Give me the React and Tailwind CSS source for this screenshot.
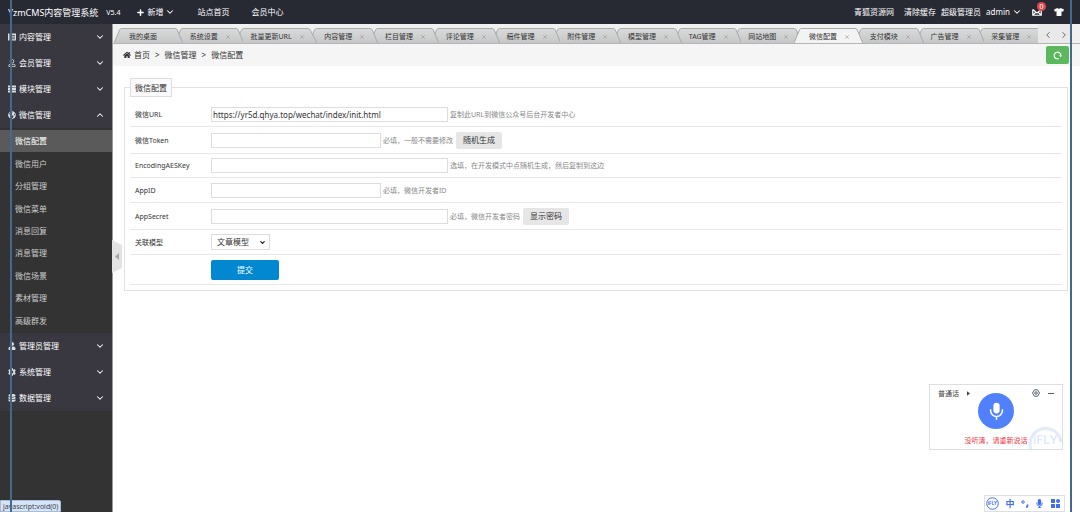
import React from 'react';
import { ChevronDown, ChevronUp, ChevronLeft, ChevronRight, Plus, X } from 'lucide-react';
import {
  FaHome, FaTshirt, FaUser, FaCog, FaDatabase, FaRegUser, FaThList, FaGlobeAmericas, FaMicrophone,
} from 'react-icons/fa';

function BookIcon({ className }) {
  return (
    <svg viewBox="0 0 16 16" className={`h-2 w-2 ${className}`} fill="currentColor">
      <path d="M0 1h3v14H0zM5 1h11v14H5zM7 4v1.500h7V4zM7 7.500V9h7V7.500zM7 11v1.500h7V11z" fillRule="evenodd" />
    </svg>
  );
}

const MENU = [
  { name: '内容管理', icon: BookIcon },
  { name: '会员管理', icon: FaRegUser },
  { name: '模块管理', icon: FaThList },
  {
    name: '微信管理',
    icon: FaGlobeAmericas,
    items: ['微信配置', '微信用户', '分组管理', '微信菜单', '消息回复', '消息管理', '微信场景', '素材管理', '高级群发'],
  },
  { name: '管理员管理', icon: FaUser },
  { name: '系统管理', icon: FaCog },
  { name: '数据管理', icon: FaDatabase },
];

const TABS = [
  '我的桌面', '系统设置', '批量更新URL', '内容管理', '栏目管理', '评论管理', '稿件管理', '附件管理',
  '模型管理', 'TAG管理', '网站地图', '微信配置', '支付模块', '广告管理', '采集管理',
];

function Header() {
  return (
    <header className="flex h-6 items-center bg-[#272a33] pl-2 text-[8px] text-white">
      <a href="#" className="text-[9px]">YzmCMS内容管理系统</a>
      <span className="ml-2 text-[7px]">V5.4</span>
      <nav className="ml-4 flex items-center gap-[22px]">
        <button type="button" className="flex items-center gap-0.5">
          <Plus size={9} strokeWidth={4} />
          新增
          <ChevronDown size={10} strokeWidth={2.5} />
        </button>
        <a href="#">站点首页</a>
        <a href="#">会员中心</a>
      </nav>
      <div className="ml-auto flex items-center pr-4">
        <a href="#">青狐资源网</a>
        <a href="#" className="ml-2.5">清除缓存</a>
        <span className="ml-[5px]">超级管理员</span>
        <button type="button" className="ml-[5px] flex items-center gap-0.5">
          admin
          <ChevronDown size={10} strokeWidth={2.5} />
        </button>
        <a href="#" aria-label="消息" className="relative ml-2.5">
          <svg viewBox="0 0 20 16" className="h-2 w-2.5" fill="none" stroke="currentColor" strokeWidth="2.4">
            <path d="M1.500 3v11.500h17V3M1.500 3l8.500 7 8.500-7M1.500 14.500l6-6M18.500 14.500l-6-6" />
          </svg>
          <span className="absolute -top-1.5 left-[5px] flex h-[9px] w-[9px] items-center justify-center rounded-full bg-[#e4484a] text-[7px] leading-none">0</span>
        </a>
        <button type="button" aria-label="换肤" className="ml-3"><FaTshirt size={10} /></button>
      </div>
    </header>
  );
}

function Sidebar() {
  return (
    <aside className="w-28 shrink-0 bg-[#333333] text-[8px]">
      {MENU.map(({ name, icon: Icon, items }) => (
        <section key={name}>
          <button type="button" className="flex h-[26px] w-full items-center gap-[3px] bg-[#393840] pl-2 pr-[7px] text-white">
            <Icon size={8} className="text-[#dddddd]" />
            {name}
            {items
              ? <ChevronUp size={10} strokeWidth={2.5} className="ml-auto" />
              : <ChevronDown size={10} strokeWidth={2.5} className="ml-auto" />}
          </button>
          {items && (
            <ul className="flex h-[205px] flex-col pb-px pt-0.5">
              {items.map((item, i) => (
                <li key={item} className="flex flex-1">
                  <a
                    href="#"
                    className={i === 0
                      ? 'flex flex-1 items-center bg-[#5a5a5a] pl-[15px] text-white'
                      : 'flex flex-1 items-center pl-[15px] text-[#cccccc]'}
                  >
                    {item}
                  </a>
                </li>
              ))}
            </ul>
          )}
        </section>
      ))}
    </aside>
  );
}

function Tab({ name, active, closable, order }) {
  return (
    <li className="relative flex-auto" style={{ zIndex: order }}>
      <svg
        viewBox="0 0 100 15"
        preserveAspectRatio="none"
        className="absolute inset-y-0 -left-1 h-full w-[calc(100%+8px)]"
      >
        <defs>
          <linearGradient id="tabFill" x1="0" y1="0" x2="0" y2="1">
            <stop offset="0" stopColor="#d9dada" />
            <stop offset="1" stopColor="#c6c7c8" />
          </linearGradient>
        </defs>
        <path
          d="M0 15L8 2Q9 .5 11 .5H89Q91 .5 92 2L100 15"
          fill={active ? '#f3f3f3' : 'url(#tabFill)'}
          stroke="#a9a9a9"
          vectorEffect="non-scaling-stroke"
        />
      </svg>
      <div className="relative flex h-full items-center whitespace-nowrap pl-[11px] pr-2 pt-0.5 text-[7px] text-[#333333]">
        <button type="button">{name}</button>
        {closable
          ? <button type="button" aria-label={`关闭${name}`} className="ml-[7px] text-[#8a8a8a]"><X size={6} /></button>
          : <span className="w-[13px]" />}
      </div>
    </li>
  );
}

function TabBar() {
  return (
    <div className="flex h-5 items-end border-b border-[#b5b5b5] bg-[#f0f0f1]">
      <ul className="isolate -mr-[3px] flex h-[15px] min-w-0 flex-1 overflow-hidden pl-[5px]">
        {TABS.map((name, i) => (
          <Tab
            key={name}
            name={name}
            active={name === '微信配置'}
            closable={i > 0}
            order={name === '微信配置' ? TABS.length + 1 : TABS.length - i}
          />
        ))}
      </ul>
      <div className="relative z-10 mr-2 flex h-full w-[34px] items-center justify-between bg-[#e9e9e9] pl-[5px] pr-[3px] pt-0.5 text-[#555555]">
        <button type="button" aria-label="向左"><ChevronLeft size={10} /></button>
        <button type="button" aria-label="向右"><ChevronRight size={10} /></button>
      </div>
    </div>
  );
}

function Breadcrumb() {
  return (
    <nav className="flex h-[22px] items-center bg-[#f5f5f5] pl-2.5 pr-[11px] text-[8px] text-[#333333]">
      <FaHome size={8} />
      <a href="#" className="ml-[3px]">首页</a>
      <span className="mx-[5px]">&gt;</span>
      <span>微信管理</span>
      <span className="mx-[5px]">&gt;</span>
      <span>微信配置</span>
      <button type="button" aria-label="刷新" className="ml-auto flex h-[18px] w-[23px] items-center justify-center rounded-xs bg-[#5cb85c] text-white">
        <svg viewBox="0 0 16 16" className="h-[9px] w-[9px]" fill="none" stroke="currentColor" strokeWidth="2">
          <path d="M10.500 13.500A6 6 0 1 1 14 8" />
          <path d="M11 7.500h5l-2.500 3.500z" fill="currentColor" stroke="none" />
        </svg>
      </button>
    </nav>
  );
}

const ROW_HEIGHT = {
  slim: 'h-6',
  normal: 'h-[25px]',
  tall: 'h-[27px]',
};

function Row({ label, id, hint, size = 'normal', children, action }) {
  return (
    <div className={`flex items-center border-b border-[#e8e8e8] pl-[5px] ${ROW_HEIGHT[size]}`}>
      <label htmlFor={id} className="w-[76px] shrink-0 text-[7px] text-[#333333]">{label}</label>
      {children}
      {hint && <span className="ml-0.5 text-[7px] text-[#888888]">{hint}</span>}
      {action && (
        <button type="button" className="ml-[3px] flex h-[17px] items-center rounded-xs bg-[#e6e6e6] px-[7px] text-[8px] text-[#333333]">
          {action}
        </button>
      )}
    </div>
  );
}

function Field({ id, short, value }) {
  return (
    <input
      id={id}
      type="text"
      defaultValue={value}
      className={short
        ? 'h-[15px] w-[170px] border border-[#dddddd] bg-white px-px text-[8px] text-[#333333]'
        : 'h-[15px] w-[237px] border border-[#dddddd] bg-white px-px text-[8px] text-[#333333]'}
    />
  );
}

function ConfigForm() {
  return (
    <form className="pl-[11px] pr-3 pt-3" onSubmit={(e) => e.preventDefault()}>
      <fieldset className="border border-[#e2e2e2] px-[5px] pb-[5px]">
        <legend className="flex h-[19px] items-center border border-[#dddddd] bg-[#fafafa] px-1 text-[8px] text-[#333333]">
          微信配置
        </legend>
        <div className="pt-[5px]">
          <Row label="微信URL" id="url" hint="复制此URL到微信公众号后台开发者中心">
            <Field id="url" value="https://yr5d.qhya.top/wechat/index/init.html" />
          </Row>
          <Row label="微信Token" id="token" hint="必填，一般不需要修改" action="随机生成" size="tall">
            <Field id="token" short />
          </Row>
          <Row label="EncodingAESKey" id="aes" hint="选填，在开发模式中点随机生成，然后复制到这边" size="slim">
            <Field id="aes" />
          </Row>
          <Row label="AppID" id="appid" hint="必填，微信开发者ID">
            <Field id="appid" short />
          </Row>
          <Row label="AppSecret" id="secret" hint="必填，微信开发者密码" action="显示密码" size="tall">
            <Field id="secret" />
          </Row>
          <Row label="关联模型" id="model">
            <span className="relative flex items-center">
              <select id="model" className="h-4 w-[59px] appearance-none border border-[#dddddd] bg-white pl-[5px] text-[8px] text-[#333333]">
                <option>文章模型</option>
              </select>
              <ChevronDown size={7} strokeWidth={4} className="pointer-events-none absolute right-1 text-[#222222]" />
            </span>
          </Row>
          <div className="flex h-[30px] items-center border-b border-[#e8e8e8] pl-[81px]">
            <button type="submit" className="h-5 w-[68px] rounded-xs bg-[#0288d1] text-[8px] text-white">提交</button>
          </div>
        </div>
      </fieldset>
    </form>
  );
}

function VoicePanel() {
  return (
    <div className="fixed bottom-[62px] right-[17px] h-[66px] w-[134px] border border-[#dcdfe3] bg-white">
      <svg viewBox="0 0 36 28" className="absolute bottom-0 right-0 h-7 w-9">
        <path d="M5 28A15.500 15.500 0 1 1 35 21" fill="none" stroke="#e2ebfa" strokeWidth="3" />
        <text x="7" y="23" fontSize="12" fontWeight="600" fontFamily="Inter, sans-serif" fill="#dfe9f9">iFLY</text>
      </svg>
      <div className="relative flex items-center px-2 pt-1 text-[7px] text-[#444444]">
        <button type="button" className="flex items-center gap-2">
          普通话
          <svg viewBox="0 0 4 6" className="h-[5px] w-[3px]" fill="#444444"><path d="M0 0l4 3-4 3z" /></svg>
        </button>
        <button type="button" aria-label="设置" className="ml-auto">
          <svg viewBox="0 0 16 16" className="h-2 w-2" fill="none" stroke="#56616f" strokeWidth="2">
            <path d="M5 1.500h6L15 8l-4 6.500H5L1 8z" /><circle cx="8" cy="8" r="2.500" />
          </svg>
        </button>
        <button type="button" aria-label="最小化" className="ml-2">
          <svg viewBox="0 0 6 6" className="h-1.5 w-1.5" stroke="#56616f"><path d="M0 3.500h6" /></svg>
        </button>
      </div>
      <button type="button" aria-label="语音输入" className="absolute left-12 top-2 flex h-9 w-9 items-center justify-center rounded-full bg-[#5080fb]">
        <svg viewBox="0 0 24 30" className="h-[19px] w-[15px]">
          <rect x="7" y="1" width="10" height="17" rx="5" fill="#fff" />
          <path d="M2.500 11.500v2a9.500 9.500 0 0 0 19 0v-2M12 23v5" fill="none" stroke="#fff" strokeWidth="2.500" />
        </svg>
      </button>
      <p className="absolute inset-x-0 bottom-[5px] text-center text-[7px] text-[#ee3344]">没听清，请重新说话</p>
    </div>
  );
}

function ImeBar() {
  return (
    <div className="fixed bottom-0 right-[15px] flex h-[17px] w-[81px] items-center justify-between border border-[#dcdfe3] bg-white pl-px pr-1 text-[#3f6ff0]">
      <svg viewBox="0 0 26 26" className="h-[13px] w-[13px]">
        <circle cx="13" cy="13" r="11.500" fill="none" stroke="currentColor" strokeWidth="2" />
        <text x="13" y="16.500" textAnchor="middle" fontSize="9" fontWeight="700" fontFamily="Inter, sans-serif" fill="currentColor">iFLY</text>
      </svg>
      <button type="button" className="text-[9px] font-bold">中</button>
      <svg viewBox="0 0 16 16" className="h-2 w-2" fill="none" stroke="currentColor" strokeWidth="2">
        <circle cx="4" cy="4" r="2.500" />
        <path d="M13 9v2q0 2.500-2.500 4" strokeWidth="3.500" />
      </svg>
      <FaMicrophone size={9} />
      <svg viewBox="0 0 18 18" className="h-[9px] w-[9px]" fill="currentColor">
        <path d="M0 0h8v8H0zM0 10h8v8H0zM10 10h8v8h-8z" /><circle cx="14" cy="4" r="4" />
      </svg>
    </div>
  );
}

export default function App() {
  return (
    <div className="flex min-h-screen flex-col bg-white font-['Noto_Sans','Noto_Sans_CJK_SC',sans-serif] leading-none">
      <Header />
      <div className="flex flex-1">
        <Sidebar />
        <main className="relative min-w-0 flex-1 border-l border-[#999999]">
          <TabBar />
          <Breadcrumb />
          <ConfigForm />
          <button type="button" aria-label="收起菜单" className="absolute -left-px top-[216px]">
            <svg viewBox="0 0 10 33" className="h-[33px] w-2.5">
              <path d="M0 0L10 5V28L0 33z" fill="#e2e2e2" />
              <path d="M7 13v7l-4-3.500z" fill="#a5a5a5" />
            </svg>
          </button>
        </main>
      </div>
      <div className="fixed bottom-0 left-0 flex h-3 items-center rounded-tr-xs border border-[#a9bdd8] bg-[#d5e4fb] pl-0.5 pr-0.5 text-[7px] text-[#444444]">
        javascript:void(0)
      </div>
      <VoicePanel />
      <ImeBar />
      <div className="pointer-events-none fixed inset-y-0 left-2.5 z-20 w-0.5 bg-[#45688f]" />
      <div className="pointer-events-none fixed inset-y-0 right-2 z-20 w-0.5 bg-[#45688f]" />
    </div>
  );
}
